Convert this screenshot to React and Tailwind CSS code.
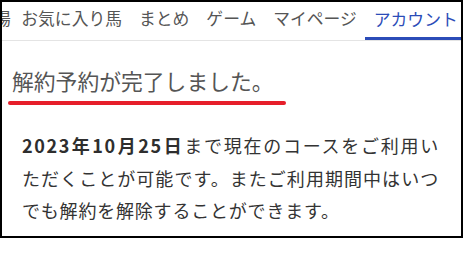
import React from "react";

const tabs = ["お気に入り馬", "まとめ", "ゲーム", "マイページ", "アカウント"];

export default function App() {
  return (
    <div
      className="w-[463px] h-[238px] border-2 border-black bg-white overflow-hidden"
      style={{ fontFamily: '"Noto Sans CJK JP", "Noto Sans", sans-serif' }}
    >
      <nav className="flex h-[38px] border-b border-[#e4e4e4] box-content overflow-hidden whitespace-nowrap text-[16.8px] text-[#555]">
        <span className="ml-[-8px] mr-[2px] flex items-center pb-[4px] flex-none">場</span>
        {tabs.map((t, i) => {
          const active = i === tabs.length - 1;
          return (
            <span
              key={t}
              className={
                active
                  ? "flex items-center px-[8.5px] pt-[1px] border-b-[3px] border-[#2b4cb8] text-[#2b4cb8] flex-none"
                  : "flex items-center px-[8.5px] pb-[4px] flex-none"
              }
            >
              {t}
            </span>
          );
        })}
      </nav>
      <h1 className="mt-[26px] ml-[10px] text-[21.8px] leading-[28px] text-[#555] font-normal">
        解約予約が完了しました。
      </h1>
      <div className="mt-[6px] ml-[6px] w-[278px] h-[4px] rounded-full bg-[#e61e2a]" />
      <p className="mt-[24px] ml-[20px] w-[417px] text-[18px] leading-[32.5px] tracking-[0.8px] text-[#333] text-justify">
        <span className="font-bold tracking-[1.6px] text-[#2e2e2e]">2023年10月25日</span>
        まで現在のコースをご利用いただくことが可能です。またご利用期間中はいつでも解約を解除することができます。
      </p>
    </div>
  );
}
